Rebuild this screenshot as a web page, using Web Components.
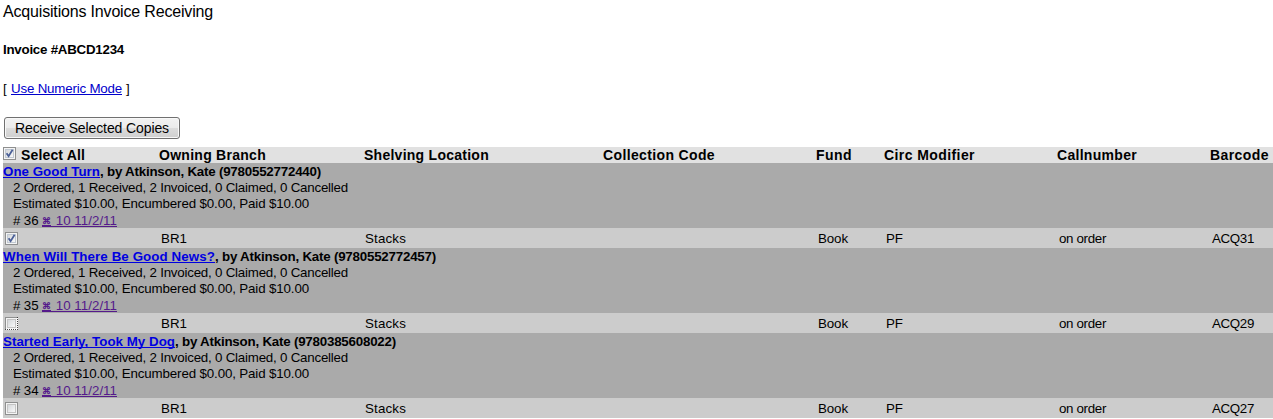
<!DOCTYPE html>
<html lang="en">
<head>
<meta charset="utf-8">
<title>Acquisitions Invoice Receiving</title>
<style>
body { margin: 0; background: #fff; color: #000; font: 13.33px/16px "Liberation Sans", Arial, sans-serif; overflow: hidden; }
</style>
</head>
<body>
<receiving-page></receiving-page>
<script>
// Inline text tracked to a fixed advance width.
class FitText extends HTMLElement {
  constructor() {
    super();
    this.attachShadow({ mode: 'open' }).innerHTML =
      '<style>:host{display:inline-block;white-space:pre;width:var(--w)}span{display:inline-block;text-decoration:var(--line,none);text-underline-offset:1px;text-decoration-thickness:1px;text-decoration-skip-ink:none}</style><span><slot></slot></span>';
  }
  connectedCallback() {
    const w = Number(this.getAttribute('w'));
    this.style.setProperty('--w', w + 'px');
    const s = this.shadowRoot.querySelector('span');
    s.style.letterSpacing = (w - s.getBoundingClientRect().width) / this.textContent.length + 'px';
  }
}

class CheckBox extends HTMLElement {
  constructor() {
    super();
    this.attachShadow({ mode: 'open' });
  }
  connectedCallback() {
    const on = this.hasAttribute('checked'), focus = this.hasAttribute('focused');
    this.shadowRoot.innerHTML = `<style>:host{display:block;width:13px;height:13px}svg{display:block}</style>
    <svg width="13" height="13" viewBox="0 0 13 13">
      <defs><linearGradient id="g" x2="1" y2="1"><stop offset="0" stop-color="#d2d5d8"/><stop offset="1" stop-color="#fbfbfb"/></linearGradient></defs>
      <rect x=".5" y=".5" width="12" height="12" fill="#f4f4f4" stroke="#8e8f8f"/>
      <rect x="2.5" y="2.5" width="8" height="8" fill="url(#g)" stroke="${on ? '#c0c8d2' : '#c4c4c4'}"/>
      ${on ? '<path d="M3.6 6.2 5.6 9.2 9.6 2.8" fill="none" stroke="#4a5f97" stroke-width="1.8"/>' : ''}
      ${focus ? '<path d="M12.5 0V13M0 12.5H13" stroke="#fff"/><path d="M12.5 0V13M0 12.5H13" stroke="#444" stroke-dasharray="1 1"/>' : ''}
    </svg>`;
  }
}

class PushButton extends HTMLElement {
  constructor() {
    super();
    this.attachShadow({ mode: 'open' }).innerHTML = `<style>
      :host{display:block;font-size:14px}
      button{display:block;box-sizing:border-box;width:176px;height:22px;margin:0;padding:0 0 0 10px;text-align:left;
        font:inherit;line-height:20px;color:#000;border:1px solid #707070;border-radius:3px;
        background:linear-gradient(#f2f2f2,#ebebeb 50%,#dcdcdc 50%,#cfcfcf);box-shadow:inset 0 0 0 1px #f8f8f8}
    </style><button><slot></slot></button>`;
  }
}

class ColumnHeads extends HTMLElement {
  constructor() {
    super();
    this.attachShadow({ mode: 'open' }).innerHTML = `<style>
      :host{display:grid;grid-template-columns:156px 205px 239px 213px 68px 173px 153px 1fr;height:16px;background:#e1e1e1;
        font-size:14px;font-weight:bold;line-height:16px;white-space:nowrap}
      .all{display:flex;gap:5px}
    </style>
    <div class="all"><check-box checked></check-box><fit-text w="64">Select All</fit-text></div>
    <fit-text w="107">Owning Branch</fit-text>
    <fit-text w="125">Shelving Location</fit-text>
    <fit-text w="112">Collection Code</fit-text>
    <fit-text w="36">Fund</fit-text>
    <fit-text w="91">Circ Modifier</fit-text>
    <fit-text w="80">Callnumber</fit-text>
    <fit-text w="59">Barcode</fit-text>`;
  }
}

class OrderItem extends HTMLElement {
  constructor() {
    super();
    this.attachShadow({ mode: 'open' });
  }
  connectedCallback() {
    const a = n => this.getAttribute(n);
    this.shadowRoot.innerHTML = `<style>
      :host{display:block}
      .info{box-sizing:border-box;height:65px;padding-top:1px;background:#aaa;white-space:nowrap}
      .line{height:16px;padding-left:10px;display:flex}
      .title{padding-left:0;font-weight:bold}
      .last{padding-top:1px;height:15px}
      a{display:flex;color:#00e;--line:underline}
      .title a{color:#0000e0}
      .visited{color:#551a8b}
      .mark{box-sizing:border-box;width:10px;height:14px;font-size:9px;line-height:16px;border-bottom:1px solid;font-weight:bold}
      .copy{box-sizing:border-box;height:20px;padding-top:3px;display:grid;background:#ccc;
        grid-template-columns:158px 204px 453px 68px 173px 153px 1fr}
      check-box{margin:1px 0 0 2px}
    </style>
    <div class="info">
      <div class="line title"><a href="#"><fit-text w="${a('tw')}">${a('name')}</fit-text></a><fit-text w="${a('aw')}">, by Atkinson, Kate (${a('isbn')})</fit-text></div>
      <div class="line"><fit-text w="335">2 Ordered, 1 Received, 2 Invoiced, 0 Claimed, 0 Cancelled</fit-text></div>
      <div class="line"><fit-text w="296">Estimated $10.00, Encumbered $0.00, Paid $10.00</fit-text></div>
      <div class="line last"><fit-text w="29"># ${a('number')} </fit-text><a class="visited" href="#"><span class="mark">⌘</span><fit-text w="65"> 10 11/2/11</fit-text></a></div>
    </div>
    <div class="copy">
      <check-box ${this.hasAttribute('checked') ? 'checked' : ''} ${this.hasAttribute('focused') ? 'focused' : ''}></check-box>
      <fit-text w="26">BR1</fit-text><fit-text w="41">Stacks</fit-text><fit-text w="30">Book</fit-text>
      <fit-text w="17">PF</fit-text><fit-text w="47">on order</fit-text><fit-text w="42">${a('barcode')}</fit-text>
    </div>`;
  }
}

class ReceivingPage extends HTMLElement {
  constructor() {
    super();
    this.attachShadow({ mode: 'open' }).innerHTML = `<style>
      :host{display:block;padding:2px 0 0 3px}
      h1{font-size:16px;line-height:20px;font-weight:normal;margin:0}
      h2{font-size:13.33px;line-height:16px;font-weight:bold;margin:20px 0 0}
      .mode{display:flex;margin:23px 0 0}
      a{color:#00c;--line:underline}
      push-button{margin:20px 0 8px 1px}
    </style>
    <h1><fit-text w="210">Acquisitions Invoice Receiving</fit-text></h1>
    <h2><fit-text w="121">Invoice #ABCD1234</fit-text></h2>
    <div class="mode"><fit-text w="8">[ </fit-text><a href="#"><fit-text w="111">Use Numeric Mode</fit-text></a><fit-text w="8"> ]</fit-text></div>
    <push-button><fit-text w="154">Receive Selected Copies</fit-text></push-button>
    <column-heads></column-heads>
    <order-item name="One Good Turn" isbn="9780552772440" tw="97" aw="221" number="36" barcode="ACQ31" checked></order-item>
    <order-item name="When Will There Be Good News?" isbn="9780552772457" tw="212" aw="221" number="35" barcode="ACQ29" focused></order-item>
    <order-item name="Started Early, Took My Dog" isbn="9780385608022" tw="172" aw="221" number="34" barcode="ACQ27"></order-item>`;
  }
}

customElements.define('fit-text', FitText);
customElements.define('check-box', CheckBox);
customElements.define('push-button', PushButton);
customElements.define('column-heads', ColumnHeads);
customElements.define('order-item', OrderItem);
customElements.define('receiving-page', ReceivingPage);
</script>
</body>
</html>
